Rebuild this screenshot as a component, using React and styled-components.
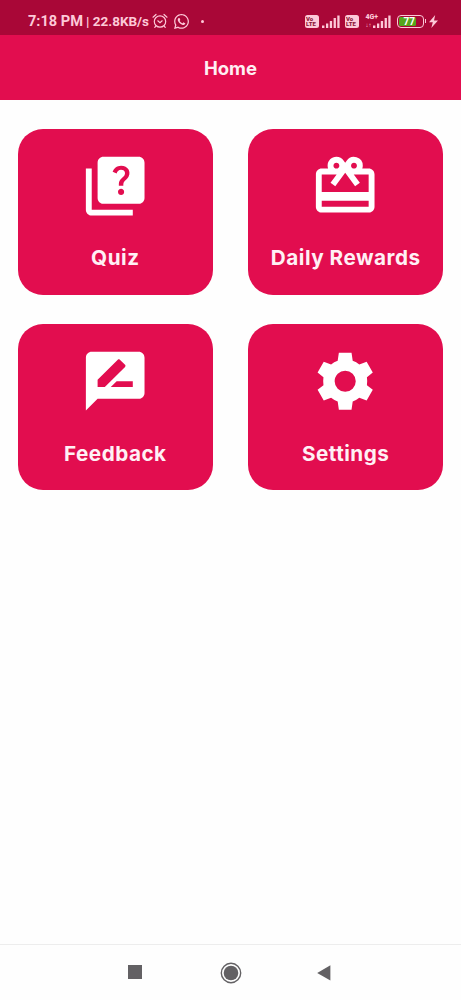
import React from 'react';
import styled, { createGlobalStyle } from 'styled-components';
import { MdCardGiftcard, MdQuiz, MdRateReview } from 'react-icons/md';
import { FaWhatsapp } from 'react-icons/fa';

// eslint-disable-next-line react/prop-types
const GearIcon = ({ size }) => (
  <svg width={size} height={size} viewBox="0 0 24 24" fill="currentColor">
    <path
      fillRule="evenodd"
      d="M9.84 2.3h4.32l.4 2.75q1.25.45 2.25 1.27l2.5-.92 2.1 3.65-2 1.6q.2 1.35 0 2.7l2 1.6-2.1 3.65-2.5-.92q-1 .82-2.25 1.27l-.4 2.75H9.84l-.4-2.75q-1.25-.45-2.25-1.27l-2.5.92-2.1-3.65 2-1.6q-.2-1.35 0-2.7l-2-1.6 2.1-3.65 2.5.92q1-.82 2.25-1.27zM12 8.4a3.6 3.6 0 1 0 0 7.2 3.6 3.6 0 0 0 0-7.2z"
    />
  </svg>
);

const MENU = [
  { label: 'Quiz', Icon: MdQuiz },
  { label: 'Daily Rewards', Icon: MdCardGiftcard },
  { label: 'Feedback', Icon: MdRateReview },
  { label: 'Settings', Icon: GearIcon },
];

const AlarmIcon = () => (
  <svg width="16" height="16" viewBox="0 0 16 16" fill="none" stroke="currentColor" strokeWidth="1.2" strokeLinecap="round">
    <circle cx="8" cy="8.5" r="5.7" />
    <path d="M1 4.2 4 1.5M15 4.2 12 1.5M3.8 13 2.8 14.4M12.2 13l1 1.4M5.8 7.8 8 9.6l2.2-1.8" />
  </svg>
);

const SignalIcon = () => (
  <svg width="18" height="13" viewBox="0 0 18 13" fill="currentColor">
    <path d="M0 10.5h2.4V13H0zM4 8.5h2.3V13H4zM7.8 6h2.3v7H7.8zM11.6 3h2.3v10h-2.3zM15.3 0.5h2.3V13h-2.3z" />
  </svg>
);

const BoltIcon = () => (
  <svg width="9" height="13" viewBox="0 0 9 13" fill="currentColor">
    <path d="M6.2 0 0 7.3h3.8L2.3 13 9 5.4H5z" />
  </svg>
);

const App = () => (
  <>
    <GlobalStyle />
    <Screen>
      <StatusBar>
        <Clock>7:18 PM</Clock>
        <NetSpeed>| 22.8KB/s</NetSpeed>
        <StatusItem left={3}><AlarmIcon /></StatusItem>
        <StatusItem left={5}><FaWhatsapp size={17} /></StatusItem>
        <Dot />
        <StatusRight>
          <Volte><span>Vo</span><span>LTE</span></Volte>
          <StatusItem left={3}><SignalIcon /></StatusItem>
          <StatusItem left={5}><Volte><span>Vo</span><span>LTE</span></Volte></StatusItem>
          <Network>
            <span>4G+</span>
            <span>↓↑</span>
          </Network>
          <StatusItem left={-7}><SignalIcon /></StatusItem>
          <Battery><Charge level={77}>77</Charge></Battery>
          <BatteryTip />
          <StatusItem left={3}><BoltIcon /></StatusItem>
        </StatusRight>
      </StatusBar>
      <Header>Home</Header>
      <Menu>
        {MENU.map(({ label, Icon }) => (
          <Card key={label}>
            <Icon size={70.4} />
            <CardLabel>{label}</CardLabel>
          </Card>
        ))}
      </Menu>
      <NavBar>
        <RecentButton />
        <HomeButton width="22" height="22" viewBox="0 0 22 22">
          <circle cx="11" cy="11" r="9.7" fill="none" stroke="#636164" strokeWidth="1.4" />
          <circle cx="11" cy="11" r="7.3" fill="#636164" />
        </HomeButton>
        <BackButton width="14" height="16" viewBox="0 0 14 16">
          <path d="M13.4.3v15.2L.2 7.9z" fill="#636164" />
        </BackButton>
      </NavBar>
    </Screen>
  </>
);

export default App;

const GlobalStyle = createGlobalStyle`
  * {
    box-sizing: border-box;
  }

  body {
    margin: 0;
    background: #fff;
  }
`;

const Screen = styled.div`
  display: flex;
  flex-direction: column;
  width: 461px;
  height: 1000px;
  overflow: hidden;
  background: #fefefe;
  font-family: Inter, 'Liberation Sans', sans-serif;
`;

const StatusBar = styled.div`
  display: flex;
  align-items: center;
  height: 35px;
  padding: 7px 23px 0 28px;
  background: #a90737;
  color: #fdc9d8;
  font-family: Roboto, sans-serif;
  white-space: nowrap;
`;

const Clock = styled.span`
  width: 58px;
  font-weight: 700;
  font-size: 14.6px;
  line-height: 18px;
`;

const NetSpeed = styled.span`
  width: 63px;
  font-weight: 700;
  font-size: 13.5px;
  line-height: 18px;
`;

const StatusItem = styled.span`
  display: flex;
  margin-left: ${props => props.left}px;
`;

const Dot = styled.span`
  width: 3px;
  height: 3px;
  margin-left: 11px;
  border-radius: 50%;
  background: currentColor;
`;

const StatusRight = styled.div`
  display: flex;
  align-items: center;
  margin-left: auto;
`;

const Volte = styled.span`
  display: flex;
  flex-direction: column;
  width: 14px;
  height: 13px;
  padding: 1px 0 0 1.5px;
  border-radius: 2.5px;
  background: #fdc9d8;
  color: #8d1538;
  font-weight: 900;
  font-size: 6px;
  line-height: 5.7px;
`;

const Network = styled.span`
  display: flex;
  flex-direction: column;
  width: 14px;
  margin-left: 7px;
  font-weight: 900;
  font-size: 7px;
  line-height: 7px;

  span + span {
    font-size: 6px;
  }
`;

const Battery = styled.span`
  display: flex;
  width: 27px;
  height: 13px;
  margin-left: 6px;
  padding: 1px;
  border: 1.5px solid #fdc9d8;
  border-radius: 4px;
`;

const Charge = styled.span`
  display: flex;
  align-items: center;
  justify-content: center;
  width: ${props => props.level}%;
  padding-left: 4px;
  border-radius: 1.5px;
  background: #55a51c;
  color: #fff;
  font-weight: 700;
  font-size: 10px;
`;

const BatteryTip = styled.span`
  width: 1.5px;
  height: 4px;
  margin-left: 1px;
  background: #fdc9d8;
`;

const Header = styled.header`
  display: flex;
  align-items: center;
  justify-content: center;
  height: 65px;
  background: #e20d4f;
  color: #ffeef3;
  font-weight: 700;
  font-size: 18.5px;
`;

const Menu = styled.main`
  display: grid;
  grid-template-columns: 195px 195px;
  grid-auto-rows: 166px;
  gap: 29.4px 35.4px;
  flex: 1;
  align-content: start;
  padding: 29px 0 0 17.8px;
`;

const Card = styled.div`
  display: flex;
  flex-direction: column;
  align-items: center;
  padding-top: 22px;
  border-radius: 25px;
  background: #e20d4f;
  color: #fff;
`;

const CardLabel = styled.span`
  margin-top: 24px;
  color: #fff0f5;
  font-weight: 700;
  font-size: 20.7px;
  line-height: 26px;
  letter-spacing: 0.5px;
`;

const NavBar = styled.nav`
  display: flex;
  align-items: center;
  height: 56px;
  padding-left: 128px;
  border-top: 1px solid #ededed;
`;

const RecentButton = styled.span`
  width: 14px;
  height: 14px;
  margin-bottom: 1px;
  background: #636164;
`;

const HomeButton = styled.svg`
  margin-left: 78px;
`;

const BackButton = styled.svg`
  margin-left: 75px;
`;
